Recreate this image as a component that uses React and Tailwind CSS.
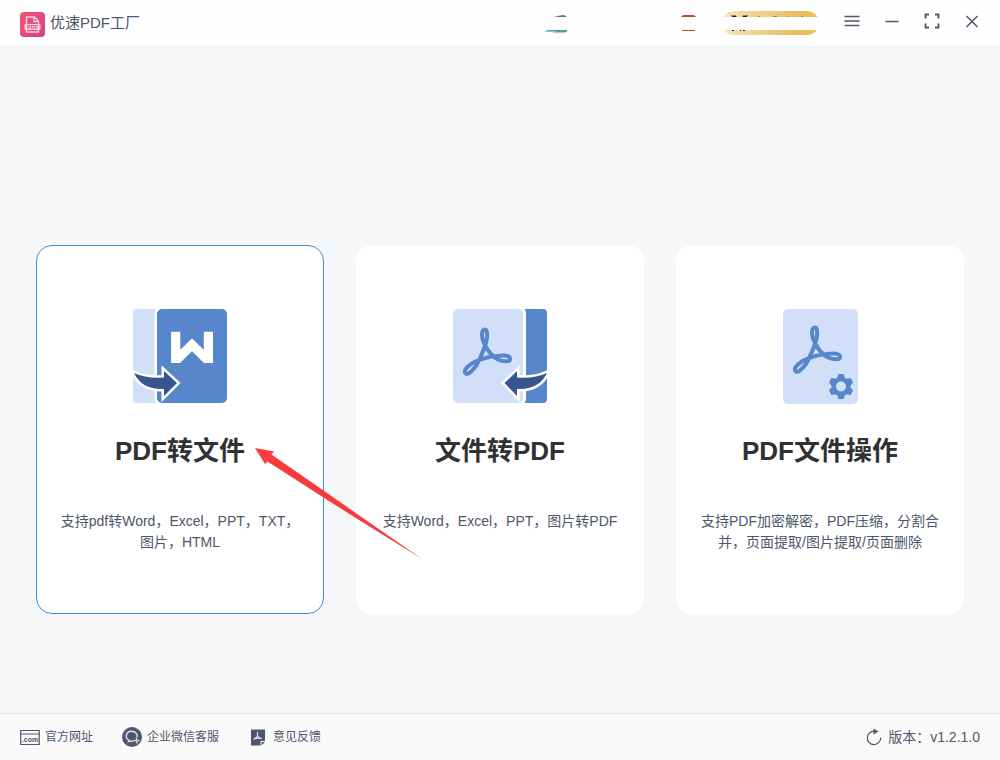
import React, { useState } from "react";

const AcrobatMark = ({ y = 0 }) => (
    <path
        transform={`translate(0 ${y})`}
        d="M29 26C29 30 30.500 33 32 36C35 42 40 48 45 50.500C51 53 57 53 57 50C57 46 50 46 44 47C38 47 28 50 24 52C18 54 10.500 60 12 63.500C14 67.500 19 62 23 57C27 50 31 40 33 34C34.500 29 35 20.500 32 20.500C29.500 20.500 29 23 29 26Z"
        fill="none"
        stroke="#5786cb"
        strokeWidth="4"
        strokeLinejoin="round"
    />
);

const PdfToFileIcon = () => (
    <svg width="94" height="95" viewBox="0 0 94 95" aria-hidden="true">
        <rect width="40" height="94" rx="4" fill="#d1dff8" />
        <rect x="21.5" y="-2" width="76" height="98" rx="6" fill="#fff" />
        <rect x="24" width="70" height="94" rx="5" fill="#5786cb" />
        <path
            d="M42.700 22.700V54M75.400 22.700V54M43.500 51L59 35.700L74.500 51"
            fill="none"
            stroke="#fff"
            strokeWidth="9.200"
        />
        <path
            d="M1 64Q14 70 31 68.500V62L44 74L31 87V80Q9 81 1 64Z"
            fill="#37558f"
            stroke="#fff"
            strokeWidth="5"
            paintOrder="stroke"
        />
    </svg>
);

const FileToPdfIcon = () => (
    <svg width="94" height="95" viewBox="0 0 94 95" aria-hidden="true">
        <rect x="54" width="40" height="94" rx="4" fill="#5786cb" />
        <rect x="-4" y="-2" width="77" height="98" rx="6" fill="#fff" />
        <rect width="70" height="94" rx="5" fill="#d1dff8" />
        <AcrobatMark />
        <path
            d="M94 64Q81 70 64 68.500V62L51.500 74L64 87V80Q86 81 94 64Z"
            fill="#37558f"
            stroke="#fff"
            strokeWidth="5"
            paintOrder="stroke"
        />
    </svg>
);

const PdfToolsIcon = () => (
    <svg width="75" height="95" viewBox="0 0 75 95" aria-hidden="true">
        <rect width="75" height="95" rx="5" fill="#d1dff8" />
        <AcrobatMark y={-2} />
        <g transform="translate(58 77.500)" fill="#5786cb">
            <circle r="9.5" />
            {[0, 60, 120, 180, 240, 300].map((angle) => (
                <path
                    key={angle}
                    transform={`rotate(${angle})`}
                    d="M-4.500 -7L-2.500 -12.500H2.500L4.500 -7Z"
                />
            ))}
            <circle r="5" fill="#d1dff8" />
        </g>
    </svg>
);

const cards = [
    {
        id: "pdf-to-file",
        title: "PDF转文件",
        text: "支持pdf转Word，Excel，PPT，TXT，图片，HTML",
        Icon: PdfToFileIcon,
    },
    {
        id: "file-to-pdf",
        title: "文件转PDF",
        text: "支持Word，Excel，PPT，图片转PDF",
        Icon: FileToPdfIcon,
    },
    {
        id: "pdf-tools",
        title: "PDF文件操作",
        text: "支持PDF加密解密，PDF压缩，分割合并，页面提取/图片提取/页面删除",
        Icon: PdfToolsIcon,
    },
];

const Logo = () => (
    <svg width="25" height="25" viewBox="0 0 25 25" aria-hidden="true">
        <defs>
            <linearGradient id="logo" x1="0" y1="0" x2="1" y2="1">
                <stop offset="0" stopColor="#f0586f" />
                <stop offset="1" stopColor="#de3b86" />
            </linearGradient>
        </defs>
        <rect width="25" height="25" rx="4" fill="url(#logo)" />
        <path
            d="M6.500 12V5H14.500L18.500 9V12M14 5V9.500H18.500M6.500 17V20H18.500V17"
            fill="none"
            stroke="#fcd3df"
            strokeWidth="1.3"
        />
        <rect x="4.5" y="12" width="16" height="6" rx="1" fill="#fcd3df" />
        <text
            x="12.5"
            y="17"
            textAnchor="middle"
            fontFamily="Liberation Sans, sans-serif"
            fontWeight="700"
            fontSize="5.500"
            fill="#e5447b"
        >
            PDF
        </text>
    </svg>
);

// avatar, gift and vip pill, with the middle strip hidden
const AccountStrip = () => (
    <svg width="276" height="24" viewBox="0 0 276 24" aria-hidden="true">
        <defs>
            <linearGradient id="vip" x1="0" x2="1">
                <stop offset="0" stopColor="#f5e3bd" />
                <stop offset="0.75" stopColor="#e9bd62" />
                <stop offset="1" stopColor="#edbd55" />
            </linearGradient>
        </defs>
        <path d="M10 6Q14 4.500 20 4L23 6Z" fill="#6b6f7c" />
        <path d="M1 19H23.500Q23 21.500 20 21.500H10Z" fill="#5a9aa5" />
        <path d="M1 20.500H12" stroke="#9cc5cb" />
        <path d="M137 6Q138 4 140 4H149Q151 4 152 6Z" fill="#c0462f" />
        <path d="M138 19H151V20H138Z" fill="#c0462f" />
        <rect x="178" width="97" height="24" rx="12" fill="url(#vip)" />
        <path
            d="M187 4.500H192L193 7H189ZM199 4.500H204L202 7H198ZM188 19H190V20H188ZM196 19H197V20H196ZM199 19H201V20H199Z"
            fill="#2d241a"
        />
        <path
            d="M214 5.500H216M229 5.500H233M244 5.500H245M257 5.500H259"
            stroke="#a5834a"
        />
        <rect x="176" y="6" width="100" height="13" fill="#fefefe" />
    </svg>
);

const windowButtons = [
    {
        label: "菜单",
        icon: (
            <path
                d="M1.500 4.500H16.500M1.500 9H16.500M1.500 13.500H16.500"
                strokeWidth="1.5"
            />
        ),
    },
    { label: "最小化", icon: <path d="M2.500 9.500H15.500" strokeWidth="1.5" /> },
    {
        label: "全屏",
        icon: (
            <path
                d="M2.500 6.500V2.500H6M12 2.500H15.500V6.500M15.500 11.500V15.500H12M6 15.500H2.500V11.500"
                strokeWidth="1.8"
            />
        ),
    },
    {
        label: "关闭",
        icon: <path d="M3.500 4L14.500 15M14.500 4L3.500 15" strokeWidth="1.5" />,
    },
];

const WebsiteIcon = () => (
    <svg width="20" height="20" viewBox="0 0 20 20" aria-hidden="true">
        <path
            d="M.7 3.500H19.200V17.500H.7ZM.7 7H19.200"
            fill="none"
            stroke="#4d566b"
            strokeWidth="1.2"
        />
        <text
            x="10"
            y="15"
            textAnchor="middle"
            fontFamily="Liberation Sans, sans-serif"
            fontWeight="700"
            fontSize="7"
            fill="#4d566b"
        >
            .com
        </text>
    </svg>
);

const ServiceIcon = () => (
    <svg width="20" height="20" viewBox="0 0 20 20" aria-hidden="true">
        <circle cx="10" cy="10" r="10" fill="#4d566b" />
        <path
            d="M12.500 13.300C9 15 7.500 13.800 6.500 14.500L6.800 13.200C2.500 10.500 4 4.300 9.500 4.300C14 4.300 15.700 7.700 15 10"
            fill="none"
            stroke="#dfe3ea"
            strokeWidth="1.4"
        />
        <path
            d="M14.500 11V13M13 13.500H14.500M16 13.500H17M15 14.500V16"
            stroke="#dfe3ea"
            strokeWidth="1.3"
            strokeLinecap="round"
        />
    </svg>
);

const FeedbackIcon = () => (
    <svg width="20" height="20" viewBox="0 0 20 20" aria-hidden="true">
        <path d="M3 2.500H17V14H12.500V18.500H3Z" fill="#4d566b" />
        <path d="M13.500 15H17L13.500 18.500Z" fill="#4d566b" />
        <path
            d="M9.500 5V9.500L5.500 12.500M9.500 9.500L14 12M7 11.700L12 11"
            fill="none"
            stroke="#dfe3ea"
            strokeWidth="1.2"
        />
    </svg>
);

const footerLinks = [
    { label: "官方网址", Icon: WebsiteIcon },
    { label: "企业微信客服", Icon: ServiceIcon },
    { label: "意见反馈", Icon: FeedbackIcon },
];

const Pointer = () => (
    <svg
        className="pointer-events-none absolute top-[202px] left-[218px] z-10"
        width="168"
        height="113"
        viewBox="0 0 168 113"
        aria-hidden="true"
    >
        <path
            d="M1 1L20 4.500L17.500 7.500L69.500 43.500L101 65.500L168 112L101 70.500L69.500 50.500L13.500 14.500L11 17Z"
            fill="#f93b3b"
        />
    </svg>
);

const App = () => {
    const [active, setActive] = useState("pdf-to-file");

    return (
        <div className="flex min-h-screen flex-col bg-[#f5f7f9] font-['Liberation_Sans','Noto_Sans_CJK_SC',sans-serif] text-[#4d566b]">
            <header className="flex h-[45px] items-center bg-[#fefefe] pr-2 pl-5">
                <div className="flex items-center gap-[5px] pt-1">
                    <Logo />
                    <h1 className="pb-1 text-[15px] leading-5">优速PDF工厂</h1>
                </div>
                <div className="ml-auto flex items-center">
                    <div className="mr-3">
                        <AccountStrip />
                    </div>
                    {windowButtons.map((item) => (
                        <button
                            key={item.label}
                            type="button"
                            aria-label={item.label}
                            className="flex h-10 w-10 items-center justify-center pb-1"
                        >
                            <svg
                                width="18"
                                height="18"
                                viewBox="0 0 18 18"
                                fill="none"
                                stroke="#4d566b"
                            >
                                {item.icon}
                            </svg>
                        </button>
                    ))}
                </div>
            </header>

            <main className="flex-1 px-9 pt-[200px] pb-16">
                <div className="grid grid-cols-3 gap-8">
                    {cards.map(({ id, title, text, Icon }) => (
                        <div key={id} className="relative flex">
                            <button
                                type="button"
                                onClick={() => setActive(id)}
                                className={`flex w-full flex-col items-center rounded-2xl border bg-white px-[23px] pt-[63px] pb-[60px] ${
                                    active === id
                                        ? "border-[#3b8edb]"
                                        : "border-white"
                                }`}
                            >
                                <Icon />
                                <span className="mt-[29px] text-[26px] leading-9 font-bold text-[#303133]">
                                    {title}
                                </span>
                                <span className="mt-[42px] text-sm leading-[21px]">
                                    {text}
                                </span>
                            </button>
                            {id === "pdf-to-file" && <Pointer />}
                        </div>
                    ))}
                </div>
            </main>

            <footer className="flex h-[47px] items-center justify-between border-t border-[#e6e9ed] bg-[#fafafa] px-5">
                <nav className="flex items-center gap-[29px]">
                    {footerLinks.map(({ label, Icon }) => (
                        <a
                            key={label}
                            href="#"
                            className="flex items-center gap-[5px] text-xs"
                        >
                            <Icon />
                            {label}
                        </a>
                    ))}
                </nav>
                <button
                    type="button"
                    className="flex items-center gap-[5px] text-sm"
                >
                    <svg
                        width="18"
                        height="18"
                        viewBox="0 0 18 18"
                        aria-hidden="true"
                    >
                        <path
                            d="M9.500 3.200A6.700 6.700 0 1 0 15.700 9.500"
                            fill="none"
                            stroke="#4d566b"
                            strokeWidth="1.2"
                        />
                        <path d="M8.500 0.500L13.500 3.500L8.500 6.500Z" fill="#4d566b" />
                    </svg>
                    版本：v1.2.1.0
                </button>
            </footer>
        </div>
    );
};

export default App;
